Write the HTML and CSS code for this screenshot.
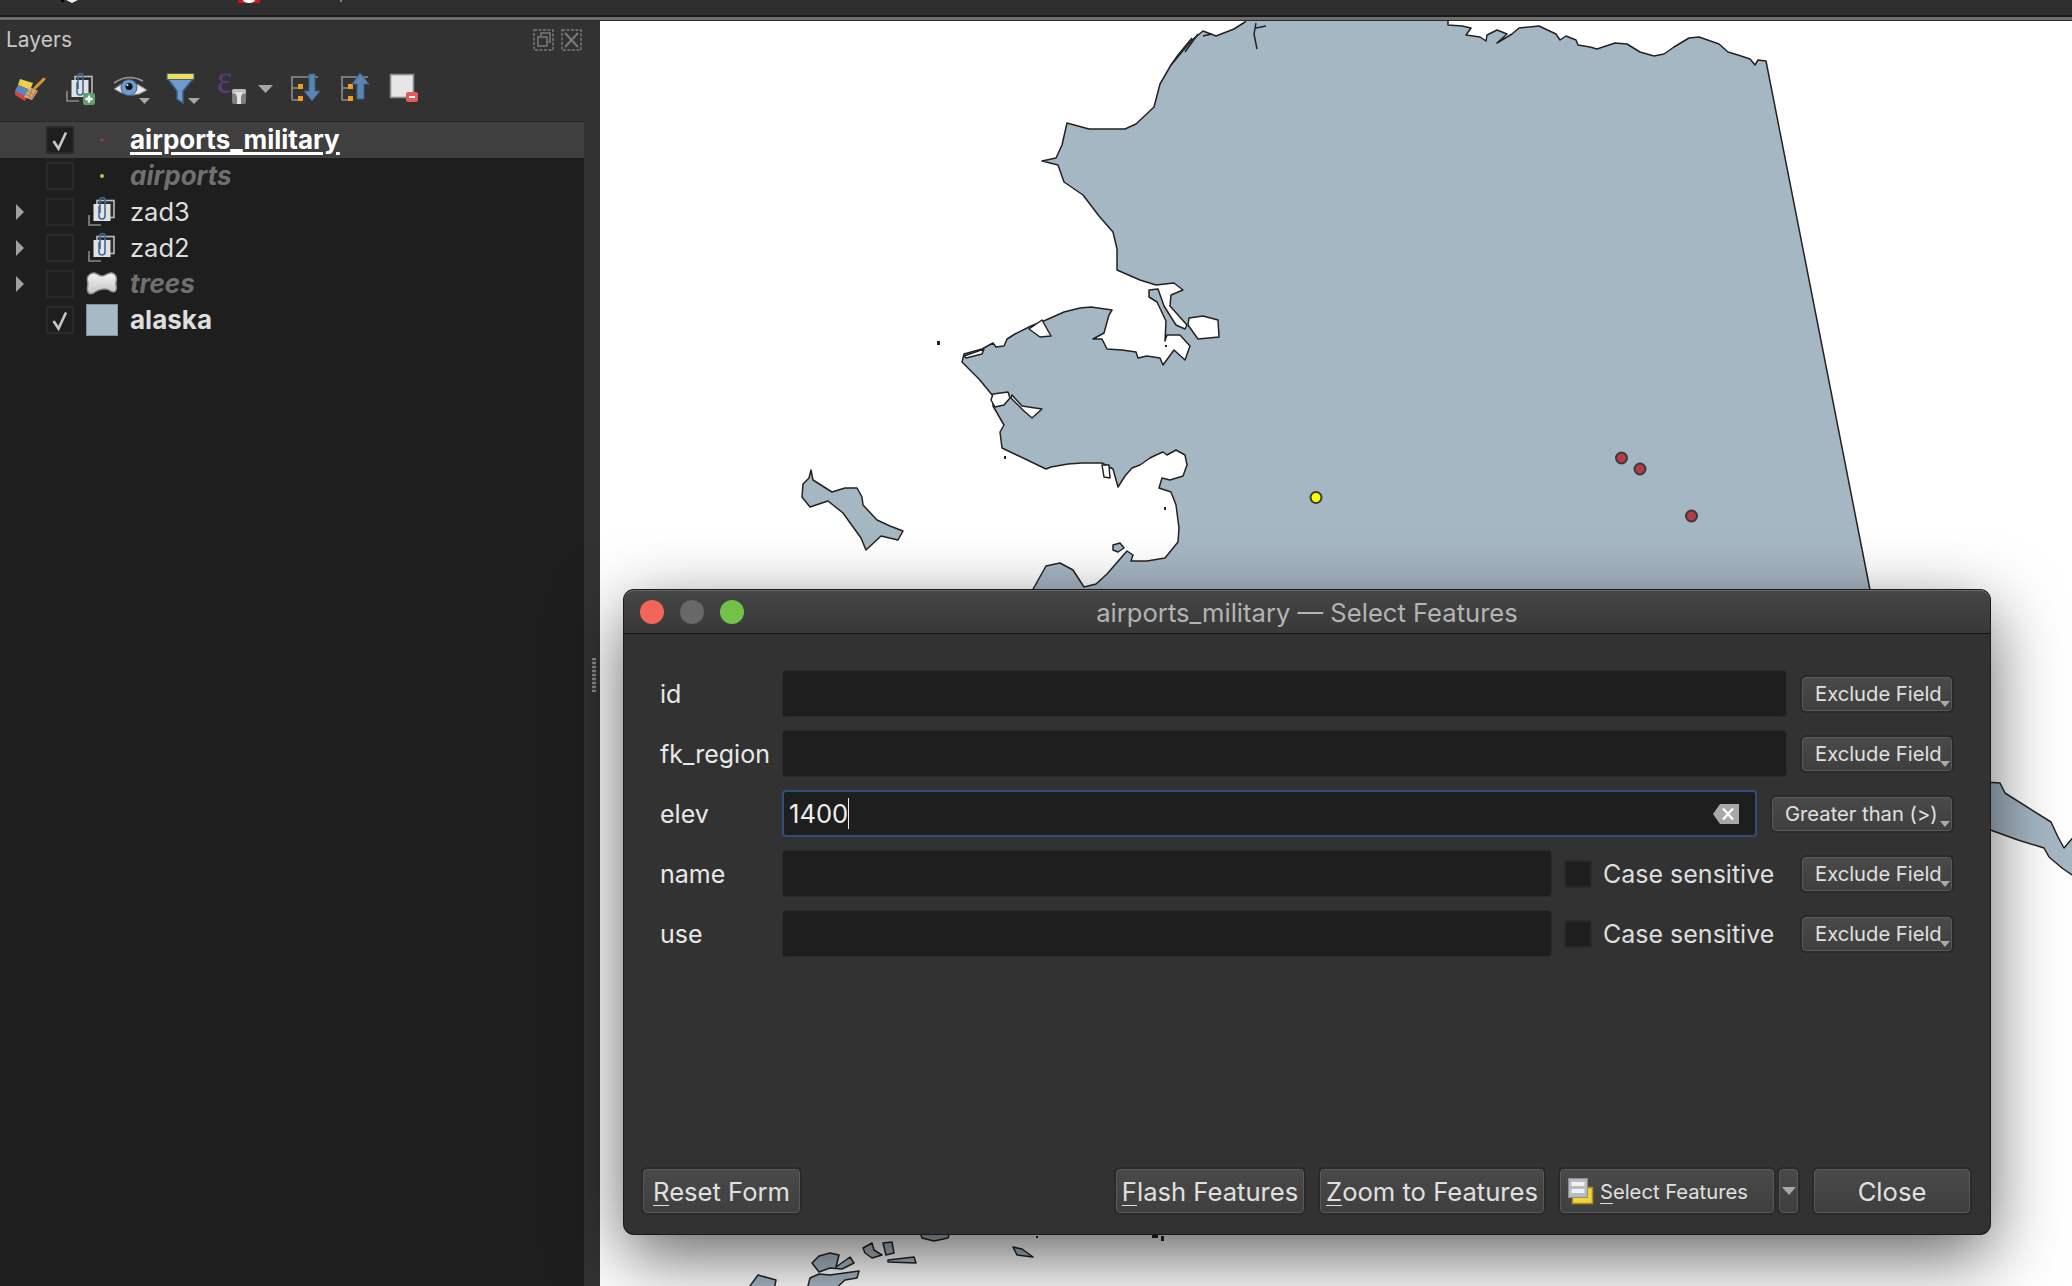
FILE: index.html
```html
<!DOCTYPE html>
<html lang="en">
<head>
    <meta charset="UTF-8">
    <meta name="viewport" content="width=device-width, initial-scale=1.0">
    <title>airports_military - Select Features</title>
    <link rel="stylesheet" href="styles.css">
</head>
<body>
    <svg class="defs" width="0" height="0">
        <defs>
            <linearGradient id="blob-fill" x1="0" y1="0" x2="0" y2="1">
                <stop offset="0" stop-color="#f4f4f4"/>
                <stop offset="1" stop-color="#c4c4c4"/>
            </linearGradient>
        </defs>
        <symbol id="group-icon" viewBox="0 0 28 32">
            <path d="M1 19V29H13" fill="none" stroke="#8a8a8a" stroke-width="1.6"/>
            <rect x="9" y="4.5" width="17" height="17" fill="#2b2b2b" stroke="#bcbcbc" stroke-width="1.6"/>
            <rect x="5.5" y="8" width="17" height="17" fill="#e2e2e2"/>
            <path d="M11 10V20a3 3 0 0 0 6 0V4a2.5 2.5 0 0 0-5 0V17" fill="none" stroke="#3f6a98" stroke-width="1.6"/>
        </symbol>
        <symbol id="check" viewBox="0 0 28 28">
            <path d="M7.5 15L12.5 22.5L20 6.5" fill="none" stroke="#c8c8c8" stroke-width="2.6"/>
        </symbol>
    </svg>

    <header class="topbar">
        <svg class="topbar-bits" width="400" height="13" viewBox="0 0 400 13">
            <path d="M66 0L72 3L78 0Z" fill="#eee"/>
            <path d="M61 0H64V2H61Z" fill="#000"/>
            <rect x="238" y="0" width="22" height="3" fill="#c8161c"/>
            <ellipse cx="249" cy="0" rx="6" ry="3" fill="#fff"/>
            <rect x="340" y="0" width="2" height="2" fill="#5b84b0"/>
        </svg>
    </header>

    <div class="workspace">
        <aside class="layers-panel">
            <div class="panel-title">
                <span>Layers</span>
                <div class="dock-buttons">
                    <svg width="21" height="22" viewBox="0 0 21 22">
                        <rect x="1" y="1" width="19" height="20" fill="none" stroke="#7a7a7a" stroke-width="1.5" stroke-dasharray="3 1.5"/>
                        <rect x="5" y="8" width="9" height="9" fill="none" stroke="#7a7a7a" stroke-width="1.5"/>
                        <path d="M8 7V4H17V13H15" fill="none" stroke="#7a7a7a" stroke-width="1.5"/>
                    </svg>
                    <svg width="21" height="22" viewBox="0 0 21 22">
                        <rect x="1" y="1" width="19" height="20" fill="none" stroke="#7a7a7a" stroke-width="1.5" stroke-dasharray="3 1.5"/>
                        <path d="M4 4L17 18M17 4L4 18" stroke="#7a7a7a" stroke-width="2"/>
                    </svg>
                </div>
            </div>

            <div class="toolbar">
                <svg class="tool" viewBox="0 0 36 36">
                    <polygon points="8,8 21,12 18,19 6,14" fill="#ecd04a"/>
                    <polygon points="6,14 18,19 14,27 3,20" fill="#5b84c0"/>
                    <polygon points="3,20 15,26 13,30 3,24" fill="#d8413c"/>
                    <polygon points="18,16 26,20 20,29 12,26" fill="#d6a878"/>
                    <path d="M16 20L22 24M14 23L20 27M20 18L17 27M24 20L20 27" stroke="#a87c50" stroke-width="1"/>
                    <path d="M23 17L32 8" stroke="#d9952e" stroke-width="3" stroke-linecap="round"/>
                </svg>
                <svg class="tool" viewBox="0 0 36 36">
                    <use href="#group-icon" x="4" y="1" width="28" height="32"/>
                    <rect x="21" y="22" width="12" height="12" rx="2" fill="#5f9e6e"/>
                    <path d="M27 24.5V31.5M23.5 28H30.5" stroke="#fff" stroke-width="2.4"/>
                </svg>
                <svg class="tool" viewBox="0 0 36 36">
                    <path d="M2 12Q16 2 31 10" fill="none" stroke="#9a9a9a" stroke-width="1.6"/>
                    <path d="M2 18Q17 5 35 19Q20 30 2 18Z" fill="#e8e8e8" stroke="#777" stroke-width="1"/>
                    <circle cx="17" cy="16.5" r="8" fill="#6f9bd1" stroke="#3e5f8a" stroke-width="1"/>
                    <circle cx="17" cy="15.5" r="3.5" fill="#111"/>
                    <circle cx="15.5" cy="14" r="1" fill="#fff"/>
                    <polygon points="27,27 38,27 32.5,33" fill="#a8a8a8"/>
                </svg>
                <svg class="tool" viewBox="0 0 36 36">
                    <polygon points="6,8 31,8 21,20 21,32 15,28 15,20" fill="#6f9bd1" stroke="#3c5f88" stroke-width="1.5"/>
                    <rect x="5" y="2.5" width="27" height="6" fill="#f3dc50" stroke="#3c5f88" stroke-width="1"/>
                    <polygon points="26,27 38,27 32,33" fill="#a8a8a8"/>
                </svg>
                <svg class="tool tool-wide" viewBox="0 0 62 36">
                    <text x="5" y="22" class="epsilon" textLength="15" lengthAdjust="spacingAndGlyphs">ε</text>
                    <rect x="20" y="18" width="14" height="15" rx="2" fill="#7e7e7e"/>
                    <rect x="20" y="18" width="14" height="5" rx="2" fill="#bdbdbd"/>
                    <polygon points="23,21 31,21 29,26 29,33 25,33 25,26" fill="#e2e2e2"/>
                    <polygon points="46,14 61,14 53.5,22" fill="#a8a8a8"/>
                </svg>
                <svg class="tool" viewBox="0 0 36 36">
                    <path d="M3 6H30M4 6V29M4 17H10M4 29H10" fill="none" stroke="#8e8e8e" stroke-width="1.6"/>
                    <rect x="10" y="13" width="5" height="5" fill="#f39c1f"/>
                    <rect x="10" y="25" width="5" height="5" fill="#f39c1f"/>
                    <polygon points="21,3 27,3 27,20 32,20 24,30 16,20 21,20" fill="#5b84b0" stroke="#3c5f88" stroke-width="1"/>
                </svg>
                <svg class="tool" viewBox="0 0 36 36">
                    <path d="M3 6H30M4 6V29M4 17H10M4 29H10" fill="none" stroke="#8e8e8e" stroke-width="1.6"/>
                    <rect x="10" y="13" width="5" height="5" fill="#f39c1f"/>
                    <rect x="10" y="25" width="5" height="5" fill="#f39c1f"/>
                    <polygon points="22,2 31,13 26,13 26,28 19,28 19,13 14,13" fill="#5b84b0" stroke="#3c5f88" stroke-width="1"/>
                </svg>
                <svg class="tool" viewBox="0 0 36 36">
                    <rect x="2.5" y="3.5" width="23" height="23" fill="#e6e6e6" stroke="#8a8a8a" stroke-width="1.6"/>
                    <rect x="18" y="21" width="12" height="10" rx="2" fill="#e25a5c"/>
                    <path d="M21 26H27" stroke="#fff" stroke-width="2"/>
                </svg>
            </div>

            <div class="layer-tree">
                <div class="layer-row selected">
                    <span class="expander"></span>
                    <span class="checkbox"><svg viewBox="0 0 28 28"><use href="#check"/></svg></span>
                    <span class="layer-icon"><span class="dot dot-red"></span></span>
                    <span class="layer-name current">airports_military</span>
                </div>
                <div class="layer-row">
                    <span class="expander"></span>
                    <span class="checkbox"></span>
                    <span class="layer-icon"><span class="dot dot-yellow"></span></span>
                    <span class="layer-name off">airports</span>
                </div>
                <div class="layer-row">
                    <span class="expander closed"></span>
                    <span class="checkbox"></span>
                    <span class="layer-icon"><svg width="28" height="32"><use href="#group-icon"/></svg></span>
                    <span class="layer-name">zad3</span>
                </div>
                <div class="layer-row">
                    <span class="expander closed"></span>
                    <span class="checkbox"></span>
                    <span class="layer-icon"><svg width="28" height="32"><use href="#group-icon"/></svg></span>
                    <span class="layer-name">zad2</span>
                </div>
                <div class="layer-row">
                    <span class="expander closed"></span>
                    <span class="checkbox"></span>
                    <span class="layer-icon">
                        <svg width="32" height="24" viewBox="0 0 32 24">
                            <path d="M7 1C10 0 12 4 16 4C20 4 22 0 26 1C30 2 31 6 30 10C29.5 13 31 15 30 18C29 21 26 20 23 18C20 16 13 17 9 20C6 22.5 2 23 1.5 18C1 14 2.5 12 1.5 9C.5 5 3 2 7 1Z" fill="url(#blob-fill)" stroke="#8c8c8c" stroke-width="1.5"/>
                        </svg>
                    </span>
                    <span class="layer-name off">trees</span>
                </div>
                <div class="layer-row">
                    <span class="expander"></span>
                    <span class="checkbox"><svg viewBox="0 0 28 28"><use href="#check"/></svg></span>
                    <span class="layer-icon"><span class="fill-swatch"></span></span>
                    <span class="layer-name strong">alaska</span>
                </div>
            </div>
        </aside>

        <div class="splitter"><span class="grip"></span></div>

        <div class="map-canvas">
            <svg class="map" width="1472" height="1265" viewBox="600 21 1472 1265">
                <g class="land">
                    <polygon points="1027,600 1046,566 1060,563 1073,570 1084,587 1096,584 1107,574 1120,559 1127,551 1133,555 1131,561 1147,561 1165,558 1178,542 1179,528 1176,505 1171,492 1159,488 1162,478 1170,480 1183,476 1187,465 1185,455 1176,450 1167,455 1163,452 1156,455 1150,458 1140,465 1132,468 1125,476 1118,487 1113,469 1102,463 1082,463 1068,464 1051,467 1046,469 1002,448 1000,432 1004,425 993,406 993,396 979,379 962,362 964,354 982,349 993,343 996,347 1004,346 1007,339 1015,334 1031,326 1046,320 1064,312 1080,308 1091,307 1112,310 1109,315 1104,333 1093,339 1102,339 1107,349 1122,350 1136,352 1138,358 1147,356 1160,358 1163,365 1174,350 1185,360 1190,346 1180,335 1167,335 1165,341 1166,321 1157,302 1149,297 1149,290 1158,289 1164,306 1176,325 1185,329 1187,325 1170,306 1171,295 1183,290 1174,283 1156,285 1140,280 1117,270 1117,249 1113,232 1099,216 1083,195 1064,182 1058,165 1042,161 1056,158 1062,145 1067,123 1089,129 1125,129 1136,124 1154,107 1160,84 1171,65 1192,40 1203,31 1216,36 1234,29 1245,22 1250,10 1448,10 1448,25 1462,26 1471,28 1466,35 1480,37 1486,41 1487,35 1497,30 1507,34 1497,43 1512,34 1519,28 1539,26 1556,34 1560,40 1566,36 1576,40 1578,45 1590,47 1597,49 1615,43 1627,44 1640,52 1654,56 1664,54 1674,47 1689,38 1699,37 1719,44 1728,52 1738,55 1750,59 1755,65 1758,60 1766,61 1872,600"/>
                    <polygon points="811,470 813,480 832,492 845,488 857,488 862,497 863,505 877,520 890,526 903,531 898,540 881,536 866,550 861,538 843,513 828,501 810,507 802,497 803,484 809,478"/>
                    <polygon points="1985,782 2000,783 2005,793 2051,822 2058,837 2064,848 2075,835 2075,877 2062,868 2049,857 2044,848 2018,840 1985,828"/>
                    <polygon points="1113,545 1120,543 1124,548 1118,552 1113,550"/>
                    <polygon points="918,1225 952,1225 948,1238 934,1241 922,1238"/>
                    <polygon points="812,1263 819,1256 830,1253 839,1255 836,1267 850,1257 854,1263 842,1269 830,1268 819,1272"/>
                    <polygon points="807,1290 810,1278 819,1274 830,1275 859,1271 857,1278 845,1280 834,1290"/>
                    <polygon points="863,1248 872,1243 874,1250 882,1255 872,1258 865,1253"/>
                    <polygon points="883,1243 892,1242 894,1253 886,1255"/>
                    <polygon points="888,1260 914,1257 916,1263 888,1262"/>
                    <polygon points="747,1290 758,1275 776,1280 774,1290"/>
                    <polygon points="1013,1247 1022,1249 1033,1257 1017,1255"/>
                </g>
                <g class="water">
                    <polygon points="1189,318 1203,316 1218,320 1219,337 1198,339 1188,325"/>
                    <polygon points="993,394 1008,392 1010,398 1004,405 995,407 991,400"/>
                    <polygon points="1012,395 1022,406 1042,409 1032,418 1024,411 1011,398"/>
                    <polygon points="1042,320 1051,336 1040,337 1029,329"/>
                    <polygon points="1102,465 1109,465 1110,478 1104,477"/>
                    <polygon points="964,356 984,349 982,354 966,358"/>
                </g>
                <path class="coast-line" d="M1256 23L1254 34L1257 49M1256 28L1266 26M1171 65L1178 55L1192 38M1185 52L1198 34M1203 36L1212 34"/>
                <g class="specks">
                    <rect x="937" y="341" width="3" height="4"/>
                    <rect x="1004" y="456" width="2" height="3"/>
                    <rect x="1164" y="507" width="2" height="3"/>
                    <rect x="1165" y="345" width="2" height="2"/>
                    <rect x="1036" y="1236" width="2" height="2"/>
                    <rect x="1152" y="1235" width="6" height="3"/>
                    <rect x="1161" y="1236" width="3" height="5"/>
                </g>
                <circle class="airport-civil" cx="1316" cy="497.5" r="5.5"/>
                <circle class="airport-military" cx="1621.5" cy="458" r="5.5"/>
                <circle class="airport-military" cx="1640" cy="469" r="5.5"/>
                <circle class="airport-military" cx="1691.5" cy="516" r="5.5"/>
            </svg>
        </div>
    </div>

    <section class="dialog">
        <div class="titlebar">
            <div class="traffic">
                <span class="light light-red"></span>
                <span class="light light-grey"></span>
                <span class="light light-green"></span>
            </div>
            <span class="dialog-title">airports_military — Select Features</span>
        </div>

        <div class="form">
            <div class="form-row">
                <label class="field-label">id</label>
                <div class="text-input"></div>
                <button class="btn-small">Exclude Field</button>
            </div>
            <div class="form-row">
                <label class="field-label">fk_region</label>
                <div class="text-input"></div>
                <button class="btn-small">Exclude Field</button>
            </div>
            <div class="form-row">
                <label class="field-label">elev</label>
                <div class="text-input focused">
                    <span class="input-value">1400</span>
                    <svg class="clear-icon" width="26" height="20" viewBox="0 0 26 20">
                        <polygon points="0,10 7,0 26,0 26,20 7,20" fill="#a8a8a8"/>
                        <path d="M10 4.5L20 15.5M20 4.5L10 15.5" stroke="#fff" stroke-width="2.2"/>
                    </svg>
                </div>
                <button class="btn-small btn-wide">Greater than (&gt;)</button>
            </div>
            <div class="form-row">
                <label class="field-label">name</label>
                <div class="text-input"></div>
                <div class="case-option"><span class="checkbox"></span><span>Case sensitive</span></div>
                <button class="btn-small">Exclude Field</button>
            </div>
            <div class="form-row">
                <label class="field-label">use</label>
                <div class="text-input"></div>
                <div class="case-option"><span class="checkbox"></span><span>Case sensitive</span></div>
                <button class="btn-small">Exclude Field</button>
            </div>
        </div>

        <div class="dialog-footer">
            <button class="btn btn-reset"><u>R</u>eset Form</button>
            <button class="btn btn-flash"><u>F</u>lash Features</button>
            <button class="btn btn-zoom"><u>Z</u>oom to Features</button>
            <button class="btn btn-select">
                <svg width="26" height="27" viewBox="0 0 26 27">
                    <rect x="4.5" y="9.5" width="20" height="16" fill="#f0d63c" stroke="#a98c1c" stroke-width="1.5"/>
                    <rect x=".5" y=".5" width="19" height="19" fill="#b8bcc0" stroke="#8a8f94"/>
                    <rect x="3.5" y="4" width="13" height="4" fill="#f2f2f2"/>
                    <rect x="3.5" y="11" width="13" height="4" fill="#f2f2f2"/>
                </svg>
                <span><u>S</u>elect Features</span>
            </button>
            <button class="btn btn-drop"><span class="drop-arrow"></span></button>
            <button class="btn btn-close">Close</button>
        </div>
    </section>
</body>
</html>
```

FILE: styles.css
```css
* {
    box-sizing: border-box;
}

html, body {
    margin: 0;
    height: 100%;
}

body {
    position: relative;
    display: flex;
    flex-direction: column;
    height: 1286px;
    overflow: hidden;
    background: #fff;
    font-family: Inter, "Noto Sans", sans-serif;
    color: #e4e4e4;
}

.defs {
    position: absolute;
}

/* top strip */
.topbar {
    height: 21px;
    flex-shrink: 0;
    background: linear-gradient(#2f2f2f 0 15px, #1a1a1a 15px 17px, #6e6e6e 17px 20px, #2a2a2a 20px);
}

.topbar-bits {
    display: block;
}

.workspace {
    flex: 1;
    display: flex;
    min-height: 0;
}

/* layers panel */
.layers-panel {
    width: 584px;
    display: flex;
    flex-direction: column;
    background: #323232;
}

.panel-title {
    height: 37px;
    flex-shrink: 0;
    display: flex;
    align-items: center;
    justify-content: space-between;
    padding: 0 2px 0 6px;
    font-size: 21px;
    color: #c8c8c8;
}

.dock-buttons {
    display: flex;
    gap: 7px;
}

.dock-buttons svg {
    display: block;
}

.toolbar {
    height: 63px;
    flex-shrink: 0;
    display: flex;
    align-items: flex-start;
    gap: 14px;
    padding: 13px 0 0 12px;
}

.tool {
    width: 36px;
    height: 36px;
    flex-shrink: 0;
    overflow: visible;
}

.tool-wide {
    width: 62px;
}

.epsilon {
    font-family: "Liberation Serif", serif;
    font-size: 42px;
    fill: #5c3a7e;
}

.layer-tree {
    flex: 1;
    background: #1e1e1e;
    border-top: 1px solid #262626;
}

.layer-row {
    height: 36px;
    display: flex;
    align-items: center;
    font-size: 25.5px;
}

.layer-row.selected {
    background: #3f3f3f;
}

.expander {
    width: 46px;
    flex-shrink: 0;
    padding-left: 16px;
}

.expander.closed::before {
    content: "";
    display: block;
    border-left: 8px solid #a0a0a0;
    border-top: 8px solid transparent;
    border-bottom: 8px solid transparent;
    width: 0;
}

.checkbox {
    width: 28px;
    height: 28px;
    flex-shrink: 0;
    background: #1e1e1e;
    border: 2px solid #2a2a2a;
    border-radius: 2px;
    display: block;
}

.checkbox svg {
    display: block;
    margin: -2px;
    width: 28px;
    height: 28px;
}

.layer-icon {
    width: 32px;
    height: 32px;
    margin: 0 12px;
    flex-shrink: 0;
    display: flex;
    align-items: center;
    justify-content: center;
}

.dot {
    width: 4px;
    height: 4px;
    border-radius: 50%;
}

.dot-red {
    background: #7e3a52;
}

.dot-yellow {
    background: #b8c832;
}

.fill-swatch {
    width: 32px;
    height: 32px;
    background: #a8b9c6;
    border: 1px solid #7f8f9c;
}

.layer-name {
    padding-bottom: 2px;
    color: #dedede;
}

.layer-name.current {
    font-size: 26px;
    font-weight: 700;
    color: #fff;
    text-decoration: underline;
    text-decoration-thickness: 3px;
    text-underline-offset: 3px;
}

.layer-name.off {
    font-size: 26px;
    font-weight: 700;
    font-style: italic;
    color: #707070;
}

.layer-name.strong {
    font-size: 26px;
    font-weight: 700;
}

.splitter {
    width: 16px;
    background: #323232;
    display: flex;
    align-items: center;
    justify-content: center;
}

.grip {
    width: 4px;
    height: 34px;
    margin: 43px 0 0 3px;
    background: repeating-linear-gradient(#8a8a8a 0 2px, #444 2px 4px);
}

/* map */
.map-canvas {
    flex: 1;
    background: #fff;
}

.map {
    display: block;
}

.land polygon {
    fill: #a6b7c4;
    stroke: #222;
    stroke-width: 1.5;
    stroke-linejoin: round;
}

.water polygon {
    fill: #fff;
    stroke: #222;
    stroke-width: 1.5;
    stroke-linejoin: round;
}

.coast-line {
    fill: none;
    stroke: #222;
    stroke-width: 1.5;
}

.specks rect {
    fill: #222;
}

.airport-civil,
.airport-military {
    stroke: #3a3a3a;
    stroke-width: 2;
}

.airport-civil {
    fill: #ffff00;
}

.airport-military {
    fill: #b63a44;
}

/* dialog floats over the map */
.dialog {
    position: absolute;
    left: 624px;
    top: 590px;
    width: 1366px;
    height: 644px;
    display: flex;
    flex-direction: column;
    background: #323232;
    border-radius: 10px;
    box-shadow: 0 0 0 1px #1a1a1a, 0 22px 70px rgba(0, 0, 0, 0.62);
}

.titlebar {
    position: relative;
    height: 44px;
    flex-shrink: 0;
    display: flex;
    align-items: center;
    justify-content: center;
    padding-top: 2px;
    background: linear-gradient(#464646, #383838);
    border-bottom: 1px solid #111;
    border-radius: 10px 10px 0 0;
    box-shadow: inset 0 1px 0 #6a6a6a;
}

.traffic {
    position: absolute;
    left: 16px;
    top: 10px;
    display: flex;
    gap: 16px;
}

.light {
    width: 24px;
    height: 24px;
    border-radius: 50%;
}

.light-red {
    background: #f2665a;
}

.light-grey {
    background: #686868;
}

.light-green {
    background: #72c24a;
}

.dialog-title {
    font-size: 25.6px;
    color: #b4b4b4;
}

.form {
    display: flex;
    flex-direction: column;
    gap: 13px;
    padding: 36px 38px 0 36px;
}

.form-row {
    height: 47px;
    display: flex;
    align-items: center;
}

.field-label {
    width: 122px;
    flex-shrink: 0;
    padding-top: 1px;
    font-size: 25px;
    color: #e8e8e8;
}

.text-input {
    flex: 1;
    height: 47px;
    display: flex;
    align-items: center;
    justify-content: space-between;
    padding: 0 16px 0 5px;
    background: #1e1e1e;
    border: 1px solid #2b2b2b;
    border-radius: 4px;
}

.text-input.focused {
    border: 2px solid #2f4f78;
}

.input-value {
    font-size: 25.6px;
    color: #eee;
    border-right: 1px solid #eee;
    line-height: 31px;
}

.clear-icon {
    display: block;
}

.case-option {
    width: 223px;
    flex-shrink: 0;
    margin-left: 12px;
    display: flex;
    align-items: center;
    gap: 11px;
    font-size: 25px;
    color: #dedede;
    white-space: nowrap;
}

.btn-small {
    position: relative;
    width: 150px;
    height: 34px;
    flex-shrink: 0;
    margin-left: 15px;
    padding: 0 0 0 12px;
    text-align: left;
    font-family: inherit;
    font-size: 20.2px;
    color: #e0e0e0;
    background: linear-gradient(#494949, #3f3f3f);
    border: 1px solid #5a5a5a;
    border-radius: 4px;
    box-shadow: 0 0 0 2px #2a2a2a;
    white-space: nowrap;
}

.btn-wide {
    width: 180px;
}

/* little menu arrow on the corner of the button */
.btn-small::after {
    content: "";
    position: absolute;
    right: 1px;
    bottom: 3px;
    border-left: 5px solid transparent;
    border-right: 5px solid transparent;
    border-top: 6px solid #a8a8a8;
}

.dialog-footer {
    margin-top: auto;
    display: flex;
    gap: 16px;
    padding: 0 20px 21px 19px;
}

.btn {
    height: 44px;
    padding: 0;
    font-family: inherit;
    font-size: 25.6px;
    color: #e0e0e0;
    background: linear-gradient(#494949, #3f3f3f);
    border: 1px solid #5a5a5a;
    border-radius: 4px;
    box-shadow: 0 0 0 2px #2a2a2a;
    white-space: nowrap;
}

.btn u {
    text-decoration-thickness: 1px;
    text-underline-offset: 4px;
}

.btn-reset {
    width: 157px;
    margin-right: auto;
}

.btn-flash {
    width: 188px;
}

.btn-zoom {
    width: 224px;
}

.btn-select {
    width: 214px;
    display: flex;
    align-items: center;
    gap: 6px;
    padding-left: 7px;
    font-size: 20.2px;
}

.btn-drop {
    width: 19px;
    margin-left: -11px;
    display: flex;
    align-items: center;
    justify-content: center;
}

.drop-arrow {
    border-left: 7px solid transparent;
    border-right: 7px solid transparent;
    border-top: 8px solid #a8a8a8;
}

.btn-close {
    width: 156px;
}
```
